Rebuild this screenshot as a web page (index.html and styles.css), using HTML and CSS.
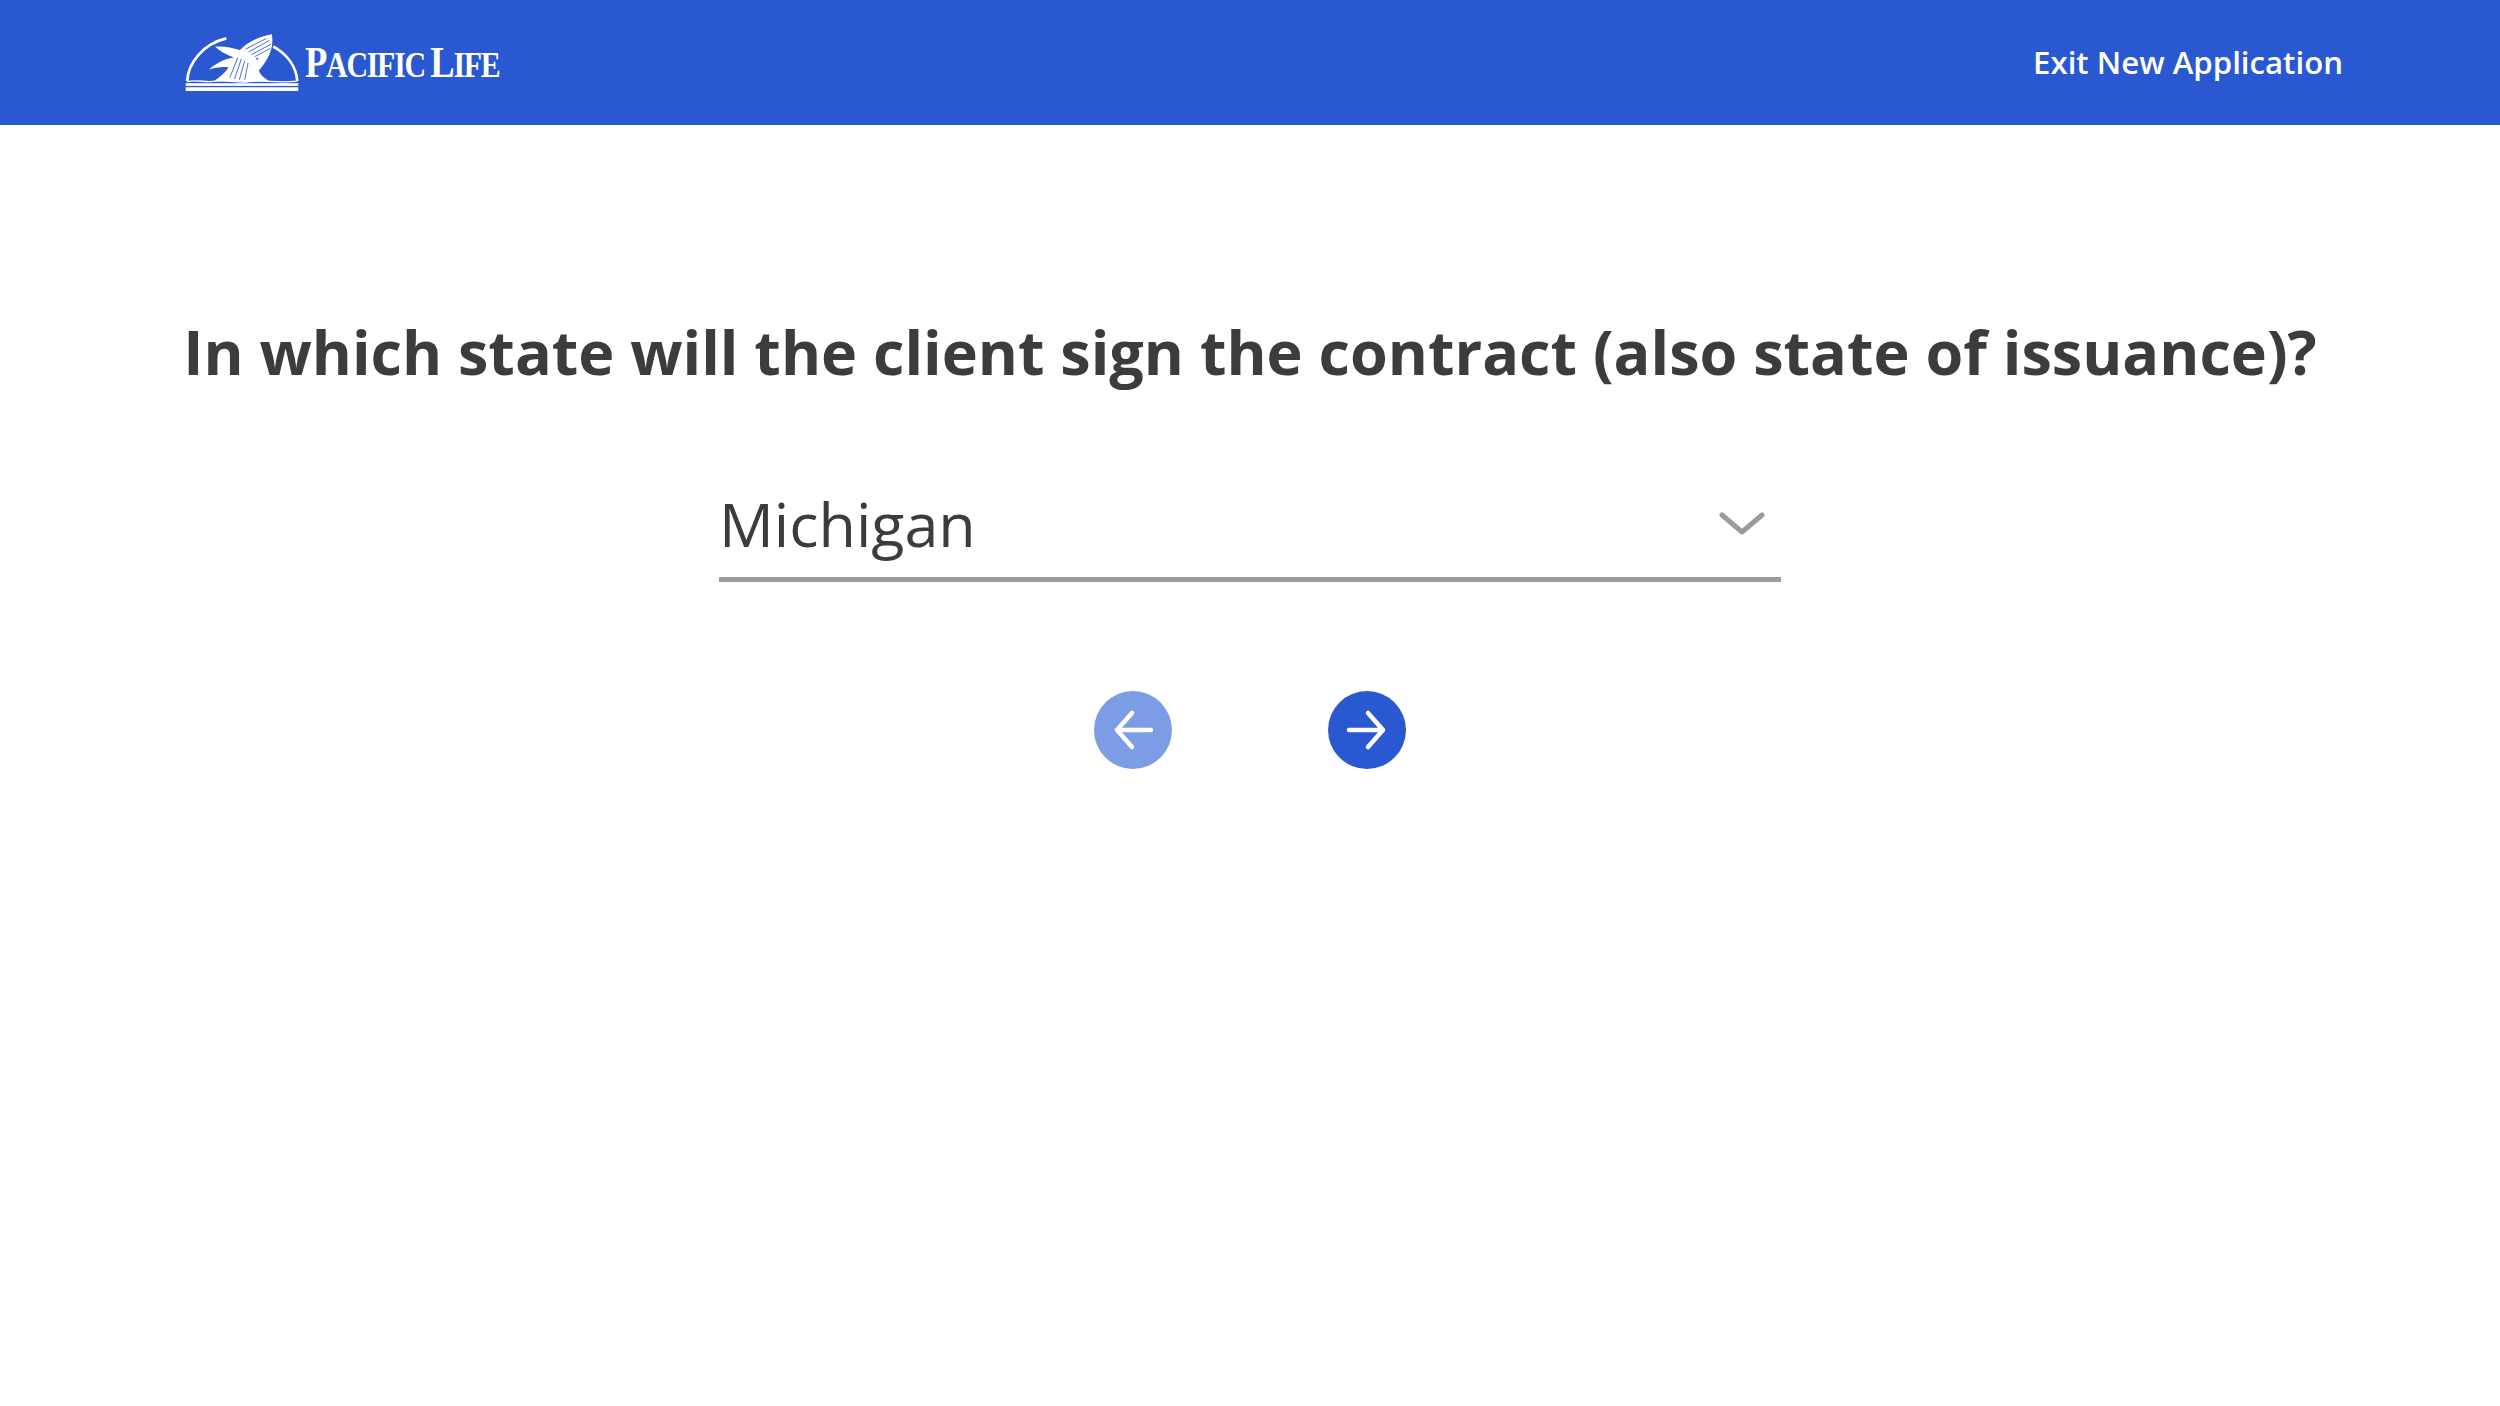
FILE: index.html
```html
<!DOCTYPE html>
<html lang="en">
<head>
  <meta charset="UTF-8">
  <title>New Application</title>
  <link rel="stylesheet" href="styles.css">
</head>
<body>
  <header class="topbar">
    <div class="brand">
      <svg class="brand-mark" viewBox="50 40 336 174" aria-hidden="true">
        <path class="arch" d="M56 182 C60 125 105 72 172 56"/>
        <path class="arch" d="M310 80 C352 103 378 140 381 182"/>
        <path class="fill" d="M306 44 C270 50 235 66 212 90 C190 84 165 78 138 80 C152 94 172 104 194 112 C176 114 146 124 120 148 C140 141 160 139 178 141 C170 156 152 170 136 182 L298 182 C282 172 270 162 268 150 C290 124 314 90 306 44Z"/>
        <path class="groove" d="M228 88 L290 56 M237 96 L299 62 M246 104 L303 73 M255 110 L302 85 M206 112 L182 172 M216 116 L196 176 M226 122 L210 178 M236 128 L226 178"/>
        <circle class="eye" cx="263" cy="116" r="3"/>
        <path class="water" d="M56 183 C90 177 110 187 140 182 C180 177 200 189 240 183 C280 177 320 189 380 182"/>
        <rect class="fill" x="52" y="188" width="332" height="8"/>
        <rect class="fill" x="52" y="200" width="332" height="11"/>
      </svg>
      <span class="brand-name">P<span class="small-cap">acific</span> L<span class="small-cap">ife</span></span>
    </div>
    <a class="exit-link" href="#">Exit New Application</a>
  </header>

  <main class="question">
    <h1>In which state will the client sign the contract (also state of issuance)?</h1>
    <div class="state-select">
      <span class="state-value">Michigan</span>
      <svg class="chevron" viewBox="0 0 46 24" aria-hidden="true">
        <path d="M3 3 L23 20 L43 3"/>
      </svg>
    </div>
    <div class="nav-buttons">
      <button class="nav-btn back" aria-label="Back">
        <svg viewBox="0 0 78 78"><path d="M57 39 H23 M38 22 L23 39 L38 56"/></svg>
      </button>
      <button class="nav-btn next" aria-label="Next">
        <svg viewBox="0 0 78 78"><path d="M21 39 H55 M40 22 L55 39 L40 56"/></svg>
      </button>
    </div>
  </main>
</body>
</html>
```

FILE: styles.css
```css
body {
  margin: 0;
  background: #fff;
  color: #3c3c3f;
  font-family: "Open Sans", Arial, sans-serif;
}
.topbar {
  height: 125px;
  background: #2a58d0;
  color: #fff;
  display: flex;
  justify-content: space-between;
  align-items: center;
  padding: 0 157px 0 185px;
}
.brand {
  display: flex;
  align-items: center;
  gap: 6px;
}
.brand-mark {
  width: 114px;
  height: 59px;
  display: block;
}
.arch {
  fill: none;
  stroke: #fff;
  stroke-width: 8;
}
.fill {
  fill: #fff;
}
.groove {
  fill: none;
  stroke: #2a58d0;
  stroke-width: 2.5;
}
.eye {
  fill: #2a58d0;
}
.water {
  fill: none;
  stroke: #fff;
  stroke-width: 4;
}
.brand-name {
  display: inline-block;
  font-family: "Liberation Serif", "Times New Roman", serif;
  font-weight: 700;
  font-size: 44px;
  letter-spacing: -1.5px;
  word-spacing: -3px;
  white-space: nowrap;
  transform: scaleX(0.83);
  transform-origin: left center;
}
.small-cap {
  font-size: 36px;
  text-transform: uppercase;
}
.exit-link {
  color: #fff;
  text-decoration: none;
  font-size: 31.2px;
  font-weight: 600;
  margin-bottom: 2px;
}
.question {
  display: flex;
  flex-direction: column;
  align-items: center;
}
h1 {
  margin: 0;
  padding-top: 182px;
  font-size: 61.1px;
  line-height: 90px;
  font-weight: 700;
  white-space: nowrap;
}
.state-select {
  box-sizing: border-box;
  width: 1062px;
  height: 130px;
  margin-top: 55px;
  border-bottom: 5px solid #9b9b9b;
  display: flex;
  justify-content: space-between;
  align-items: center;
  padding: 18px 16px 0 0;
}
.state-value {
  font-size: 61px;
  font-weight: 400;
}
.chevron {
  width: 46px;
  height: 24px;
  fill: none;
  stroke: #9b9b9b;
  stroke-width: 5;
  stroke-linecap: round;
  stroke-linejoin: round;
}
.nav-buttons {
  display: flex;
  gap: 156px;
  margin-top: 109px;
}
.nav-btn {
  width: 78px;
  height: 78px;
  padding: 0;
  border: none;
  border-radius: 50%;
  cursor: pointer;
}
.nav-btn svg {
  display: block;
  width: 100%;
  height: 100%;
  fill: none;
  stroke: #fff;
  stroke-width: 4.5;
  stroke-linecap: round;
  stroke-linejoin: round;
}
.back {
  background: #7c9ce6;
}
.next {
  background: #2a58d0;
}
```
